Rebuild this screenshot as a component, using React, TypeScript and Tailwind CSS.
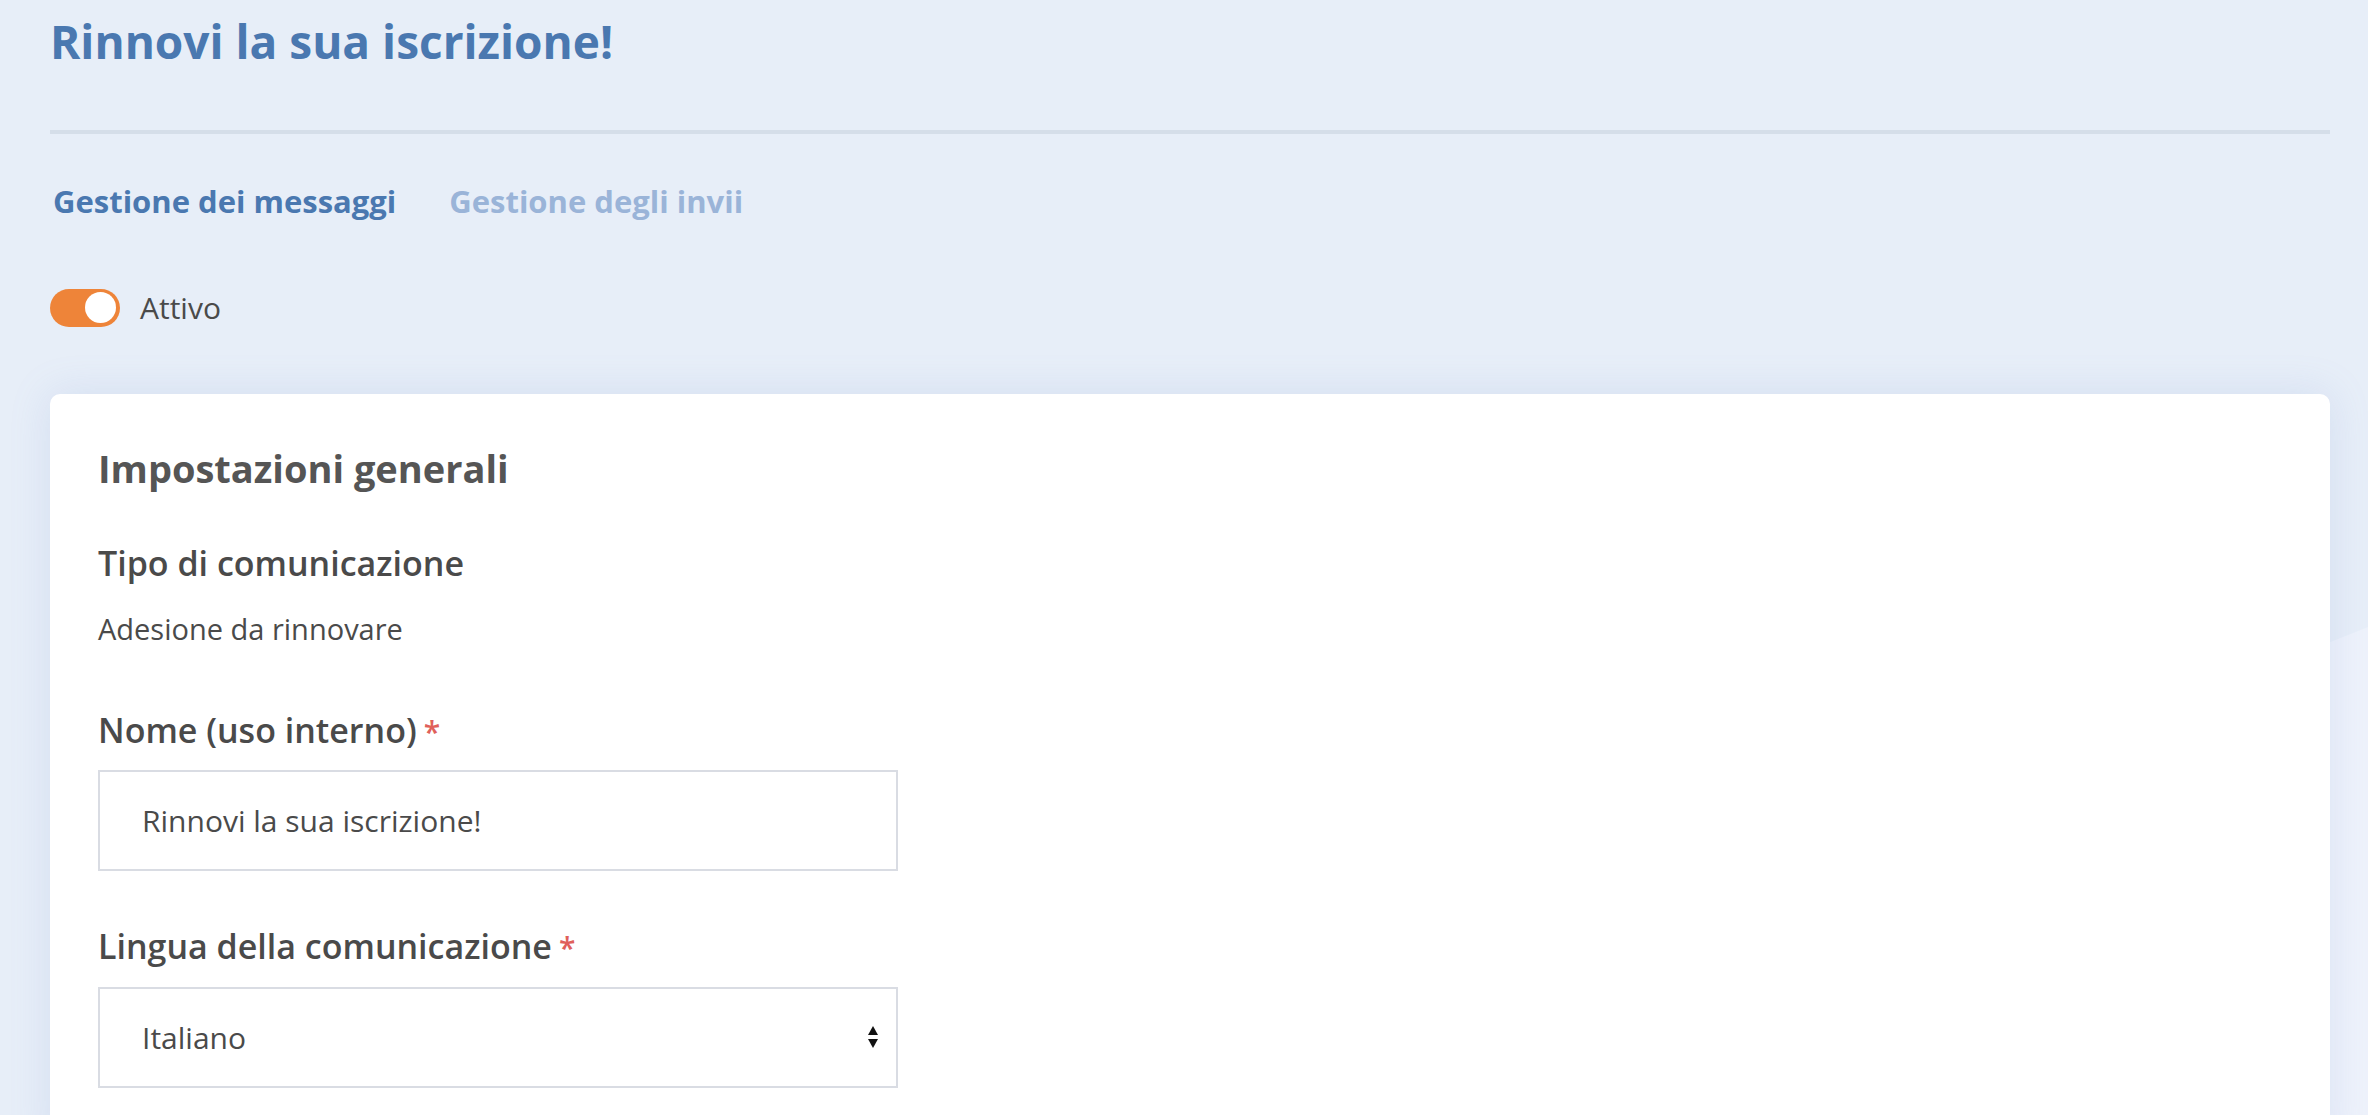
import { useState } from "react";

function Toggle({ on, onChange }: { on: boolean; onChange: (v: boolean) => void }) {
  return (
    <button
      onClick={() => onChange(!on)}
      className={`flex items-center w-[70px] h-[38px] rounded-full px-[4px] ${on ? "bg-[#ee8439] justify-end" : "bg-[#c9d3e2] justify-start"}`}
    >
      <span className="block w-[31px] h-[31px] rounded-full bg-white" />
    </button>
  );
}

function Label({ text, required }: { text: string; required?: boolean }) {
  return (
    <div className="text-[34px] leading-[40px] font-semibold text-[#4a4a4a]">
      {text}
      {required && <span className="text-[#e0605a] text-[30px] ml-[7px]">*</span>}
    </div>
  );
}

export default function App() {
  const [active, setActive] = useState(true);
  const [name, setName] = useState("Rinnovi la sua iscrizione!");
  const [lang, setLang] = useState("it");

  return (
    <div
      className="relative min-h-[1115px] bg-[#e7eef8] overflow-hidden pl-[50px] pr-[38px] pt-[15px]"
      style={{ fontFamily: "'Open Sans', 'Noto Sans', sans-serif" }}
    >
      {/* decorative shape behind the card */}
      <svg className="absolute right-0 top-[627px] w-[120px] h-[488px]" viewBox="0 0 120 488" preserveAspectRatio="none">
        <polygon points="0,48 120,0 120,488 0,488" fill="#eef2fb" />
      </svg>

      <div className="relative">
        <h1 className="text-[46px] leading-[52px] font-bold text-[#4a78b0]">Rinnovi la sua iscrizione!</h1>

        <div className="mt-[63px] h-[4px] bg-[#d5dee9]" />

        <div className="flex gap-[53px] mt-[47px] pl-[3px]">
          <button className="text-[31px] leading-[40px] font-bold text-[#4a78b0]">Gestione dei messaggi</button>
          <button className="text-[31px] leading-[40px] font-bold text-[#9ab4d8]">Gestione degli invii</button>
        </div>

        <div className="flex items-center gap-[20px] mt-[64px]">
          <Toggle on={active} onChange={setActive} />
          <span className="text-[30px] text-[#4a4a4a]">Attivo</span>
        </div>

        <div className="mt-[64px] bg-white rounded-[10px] shadow-[0_0_40px_rgba(120,150,210,0.18)] px-[48px] pt-[51px] pb-[60px]">
          <h2 className="text-[38px] leading-[46px] font-bold text-[#555555]">Impostazioni generali</h2>

          <div className="mt-[52px]">
            <Label text="Tipo di comunicazione" />
            <p className="mt-[28px] text-[29px] leading-[36px] text-[#4a4a4a]">Adesione da rinnovare</p>
          </div>

          <div className="mt-[63px]">
            <Label text="Nome (uso interno)" required />
            <input
              value={name}
              onChange={(e) => setName(e.target.value)}
              className="mt-[18px] block w-[800px] h-[101px] border-2 border-[#d9dce3] px-[42px] text-[30px] text-[#4a4a4a] outline-none"
            />
          </div>

          <div className="mt-[55px]">
            <Label text="Lingua della comunicazione" required />
            <div className="relative mt-[19px] w-[800px] h-[101px]">
              <select
                value={lang}
                onChange={(e) => setLang(e.target.value)}
                className="appearance-none block w-full h-full border-2 border-[#d9dce3] bg-white px-[42px] text-[30px] text-[#4a4a4a] outline-none"
              >
                <option value="it">Italiano</option>
                <option value="en">English</option>
              </select>
              <svg className="absolute right-[19px] top-[38px] w-[12px] h-[24px] pointer-events-none" viewBox="0 0 12 24">
                <polygon points="6,1 11,10 1,10" fill="#111" />
                <polygon points="1,14 11,14 6,23" fill="#111" />
              </svg>
            </div>
          </div>
        </div>
      </div>
    </div>
  );
}
